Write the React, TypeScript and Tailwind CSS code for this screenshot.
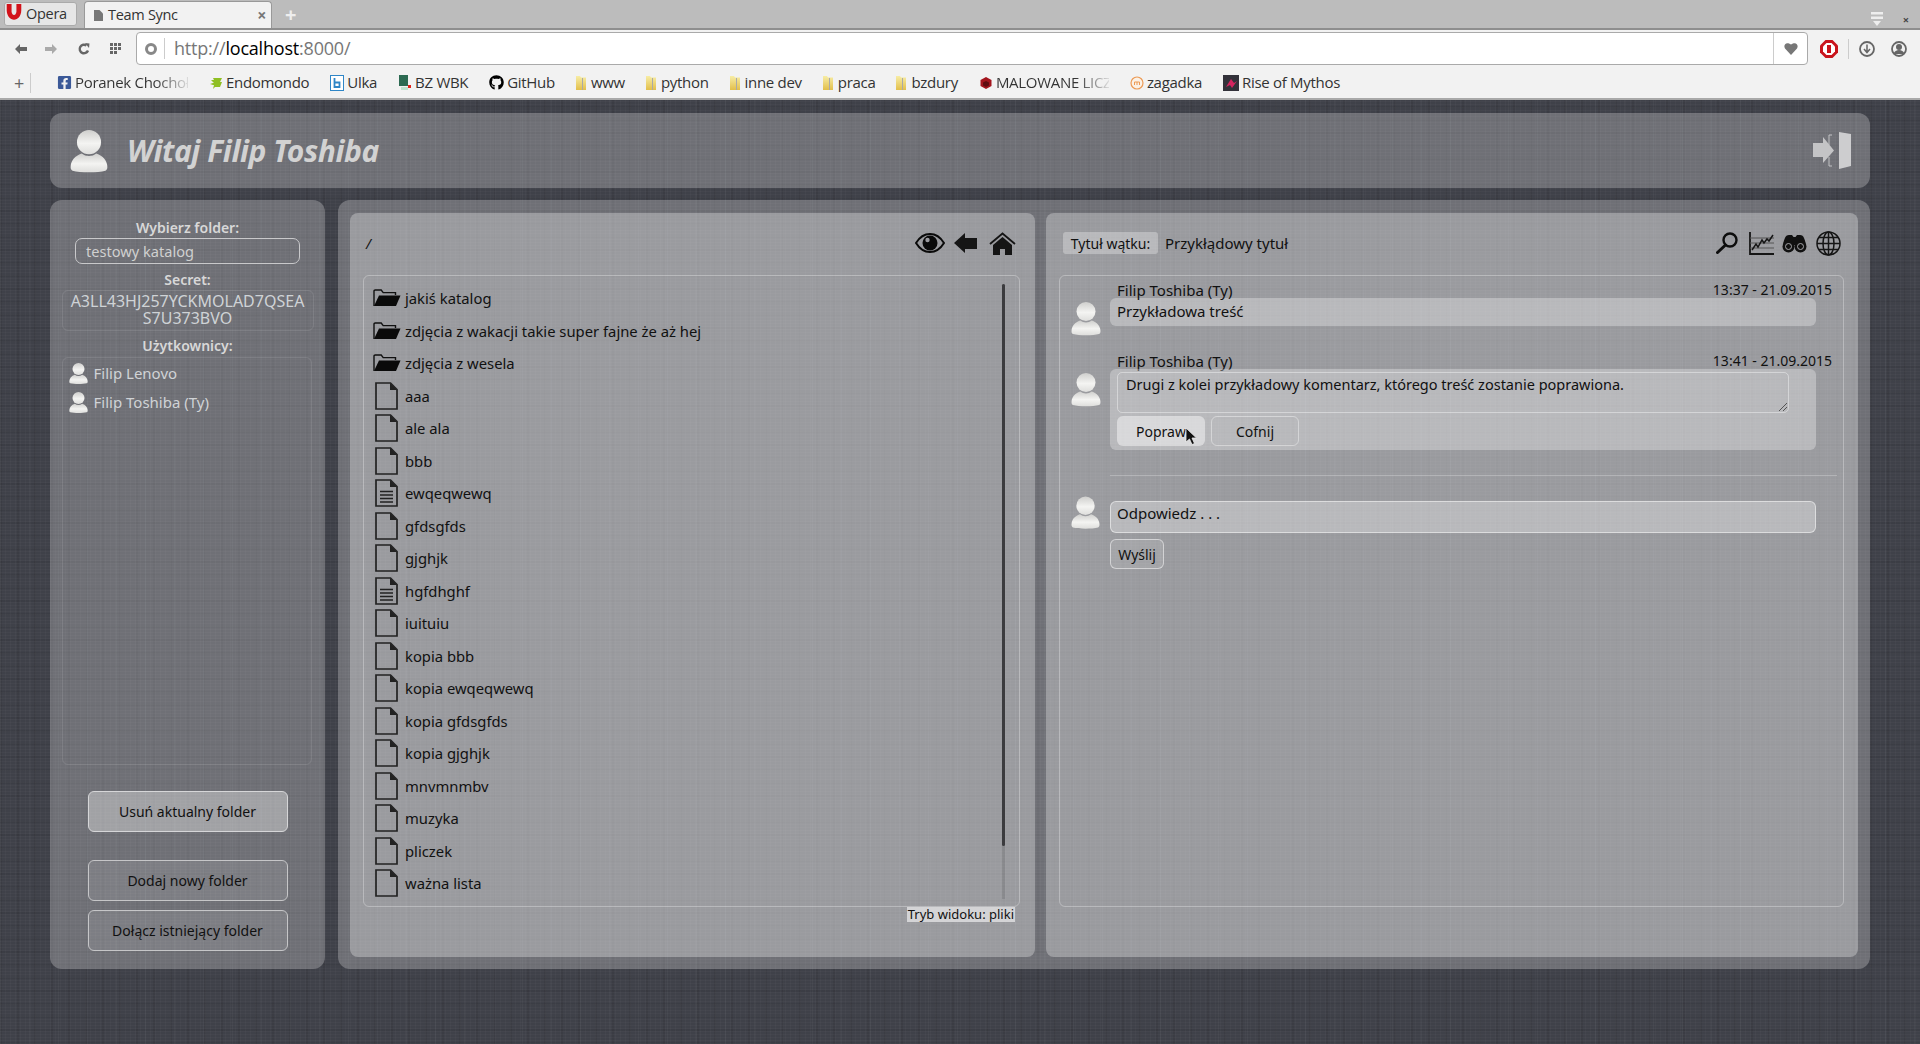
import React from 'react';
import { FaGithub, FaFacebookSquare } from 'react-icons/fa';

const bookmarks = [
  { label: 'Poranek Chochoł', kind: 'fb', faded: true },
  { label: 'Endomondo', kind: 'endo' },
  { label: 'Ulka', kind: 'ulka' },
  { label: 'BZ WBK', kind: 'bz' },
  { label: 'GitHub', kind: 'gh' },
  { label: 'www', kind: 'folder' },
  { label: 'python', kind: 'folder' },
  { label: 'inne dev', kind: 'folder' },
  { label: 'praca', kind: 'folder' },
  { label: 'bzdury', kind: 'folder' },
  { label: 'MALOWANE LICZ', kind: 'mal', faded: true },
  { label: 'zagadka', kind: 'zag' },
  { label: 'Rise of Mythos', kind: 'rise' },
];

const files = [
  { name: 'jakiś katalog', type: 'dir' },
  { name: 'zdjęcia z wakacji takie super fajne że aż hej', type: 'dir' },
  { name: 'zdjęcia z wesela', type: 'dir' },
  { name: 'aaa', type: 'file' },
  { name: 'ale ala', type: 'file' },
  { name: 'bbb', type: 'file' },
  { name: 'ewqeqwewq', type: 'text' },
  { name: 'gfdsgfds', type: 'file' },
  { name: 'gjghjk', type: 'file' },
  { name: 'hgfdhghf', type: 'text' },
  { name: 'iuituiu', type: 'file' },
  { name: 'kopia bbb', type: 'file' },
  { name: 'kopia ewqeqwewq', type: 'file' },
  { name: 'kopia gfdsgfds', type: 'file' },
  { name: 'kopia gjghjk', type: 'file' },
  { name: 'mnvmnmbv', type: 'file' },
  { name: 'muzyka', type: 'file' },
  { name: 'pliczek', type: 'file' },
  { name: 'ważna lista', type: 'file' },
];

const Avatar = ({ className }: { className: string }) => (
  <svg viewBox="0 0 30 34" className={className}>
    <defs>
      <linearGradient id="avatarFill" x1="0" y1="0" x2="0" y2="1">
        <stop offset="0" stopColor="#cfcfcd" />
        <stop offset="0.55" stopColor="#f4f4f2" />
        <stop offset="1" stopColor="#dededc" />
      </linearGradient>
    </defs>
    <path d="M2 32.5c-1.5-.5-1.6-2-1.4-4 .4-4 3.2-7.8 8.6-9.6 1.8 1.3 3.6 2 5.8 2s4-.7 5.8-2c5.4 1.8 8.2 5.6 8.6 9.6.2 2 .1 3.5-1.4 4-3 .9-8 1.2-13 1.2s-10-.3-13-1.2z" fill="url(#avatarFill)" />
    <circle cx="15" cy="10" r="9.5" fill="url(#avatarFill)" />
  </svg>
);

const FolderOpen = () => (
  <svg viewBox="0 0 28 18" className="h-[18px] w-[28px]">
    <path d="M1 17V2.2C1 1.5 1.5 1 2.2 1h6l2 2.6h12.3V6" fill="none" stroke="#111" strokeWidth="1.4" />
    <path d="M6 6.5h21.5L23 17H1z" fill="#0a0a0a" />
  </svg>
);

const FileIcon = ({ lines }: { lines?: boolean }) => (
  <svg viewBox="0 0 23 28" className="h-[28px] w-[23px]">
    <path d="M1 1h14.5L22 7.5V27H1z" fill="none" stroke="#222" strokeWidth="1.7" />
    <path d="M15 1v7h7z" fill="#222" />
    {lines && <path d="M5 12.5h13M5 16h13M5 19.5h13M5 23h13" stroke="#222" strokeWidth="1.6" />}
  </svg>
);

const FolderMini = () => (
  <svg viewBox="0 0 10 16" className="h-4 w-[10px] shrink-0">
    <defs>
      <linearGradient id="folderFill" x1="0" y1="0" x2="0" y2="1">
        <stop offset="0" stopColor="#f7eda6" />
        <stop offset="1" stopColor="#e2bf4a" />
      </linearGradient>
    </defs>
    <path d="M0 1h4l1 1.500h5V15H0z" fill="url(#folderFill)" />
    <path d="M6 3h1v12H6z" fill="#a9a9a9" />
  </svg>
);

const BookmarkIcon = ({ kind }: { kind: string }) => {
  if (kind === 'fb') return <FaFacebookSquare className="h-[15px] w-[15px] shrink-0 text-[#3b5998]" />;
  if (kind === 'gh') return <FaGithub className="h-[15px] w-[15px] shrink-0 text-black" />;
  if (kind === 'folder') return <FolderMini />;
  if (kind === 'endo')
    return (
      <svg viewBox="0 0 14 14" className="h-[14px] w-[14px] shrink-0">
        <path d="M4 2h9L11 6h2l-2 5H6l-2 2 1-4H1l3-1-3-1h4L2 4h3z" fill="#8fbf22" />
      </svg>
    );
  if (kind === 'ulka')
    return (
      <svg viewBox="0 0 14 16" className="h-4 w-[14px] shrink-0">
        <rect x="0.5" y="0.5" width="13" height="15" fill="#fff" stroke="#2f86c7" />
        <path d="M4.5 3v9h5V7.5h-5" fill="none" stroke="#2f86c7" strokeWidth="1.8" />
      </svg>
    );
  if (kind === 'bz')
    return (
      <svg viewBox="0 0 14 16" className="h-4 w-[14px] shrink-0">
        <path d="M1 0h9v11H1z" fill="#2c6a52" />
        <path d="M3 12h7v3H3z" fill="#bfe3cf" />
        <path d="M10 10h3v3h-3z" fill="#e2231a" />
      </svg>
    );
  if (kind === 'mal')
    return (
      <svg viewBox="0 0 14 14" className="h-[14px] w-[14px] shrink-0">
        <path d="M7 1l5.5 3v6L7 13 1.500 10V4z" fill="#a3151d" />
        <path d="M7 5l3 1.500v3L7 11 4 9.500v-3z" fill="#5f0c10" />
      </svg>
    );
  if (kind === 'zag')
    return (
      <svg viewBox="0 0 14 14" className="h-[14px] w-[14px] shrink-0">
        <circle cx="7" cy="7" r="6" fill="#fbf1e6" stroke="#ec9a55" strokeWidth="1.200" />
        <path d="M4.500 9V6h5v3M7 6v3" fill="none" stroke="#ec9a55" />
      </svg>
    );
  return (
    <svg viewBox="0 0 16 16" className="h-4 w-4 shrink-0">
      <rect width="16" height="16" fill="#33323a" />
      <path d="M3 12l5-8 3 4 3-2-5 7-2-3z" fill="#d5245f" />
    </svg>
  );
};

const BrowserChrome = () => (
  <div className="font-['Open_Sans',sans-serif] text-[#333]">
    <div className="flex h-[30px] items-end border-b-2 border-[#8e8e8e] bg-[#bcbcbc] pl-1">
      <div className="mb-[2px] flex h-[24px] w-[73px] items-center gap-[3px] overflow-hidden rounded-[3px] border border-[#aaa] bg-[#e6e6e6] text-[14.5px] tracking-[-0.3px]">
        <svg viewBox="0 0 14 14" className="-mt-1 h-[17px] w-[18px] shrink-0">
          <path d="M1 0h12v5c0 5-3 8-6 8S1 10 1 5z" fill="#d2121a" />
          <path d="M5 0h4v6c0 2-1 3-2 3S5 8 5 6z" fill="#e6e6e6" />
        </svg>
        Opera
      </div>
      <div className="ml-[7px] flex h-[27px] w-[188px] items-center rounded-t-[4px] border border-b-0 border-[#999] bg-[#f2f2f2] pl-[9px] pr-[5px] text-[14.5px] tracking-[-0.3px]">
        <svg viewBox="0 0 9 11" className="mr-[5px] h-[11px] w-[9px]">
          <path d="M0 0h5.500L9 3.500V11H0z" fill="#777" />
        </svg>
        Team Sync
        <span className="ml-auto text-[16px] font-bold leading-none text-[#777]">×</span>
      </div>
      <div className="mb-[2px] ml-[13px] text-[20px] font-bold leading-[22px] text-[#eee]">+</div>
      <div className="mb-[2px] ml-auto flex items-center gap-[20px] pr-[11px] text-[#666]">
        <svg viewBox="0 0 12 14" className="h-[14px] w-3">
          <path d="M0 0h12v2.500H0zM0 4.500h12V7H0z" fill="#eee" />
          <path d="M2 9h8l-4 5z" fill="#eee" />
        </svg>
        <span className="text-[11px] font-bold leading-none text-[#444]">×</span>
      </div>
    </div>
    <div className="flex h-[37px] items-center bg-[#f2f2f2]">
      <div className="flex w-[136px] items-center pl-[15px] text-[#666]">
        <svg viewBox="0 0 12 10" className="h-[10px] w-3"><path d="M0 5l5-5v3h7v4H5v3z" fill="#666" /></svg>
        <svg viewBox="0 0 12 10" className="ml-[18px] h-[10px] w-3"><path d="M12 5L7 0v3H0v4h7v3z" fill="#aaa" /></svg>
        <svg viewBox="0 0 12 12" className="ml-[21px] h-3 w-3">
          <path d="M10 7.500A4.300 4.300 0 1 1 8.500 2.500" fill="none" stroke="#666" strokeWidth="2.400" />
          <path d="M7 0l4.500.5L11 5z" fill="#666" />
        </svg>
        <svg viewBox="0 0 11 11" className="ml-[20px] h-[11px] w-[11px]">
          <path d="M0 0h3v3H0zM4 0h3v3H4zM8 0h3v3H8zM0 4h3v3H0zM4 4h3v3H4zM8 4h3v3H8zM0 8h3v3H0zM4 8h3v3H4z" fill="#666" />
        </svg>
      </div>
      <div className="flex h-[33px] w-[1672px] items-center rounded-[4px] border border-[#aaa] bg-white">
        <div className="flex h-[21px] w-[28px] items-center justify-center border-r border-[#ccc]">
          <span className="h-[12px] w-[12px] rounded-full border-[3px] border-[#888]" />
        </div>
        <div className="pl-[9px] text-[18px] tracking-[-0.2px] text-[#777]">
          http://<span className="text-black">localhost</span>:8000/
        </div>
        <div className="ml-auto flex h-full w-[34px] items-center justify-center border-l border-[#ccc]">
          <svg viewBox="0 0 14 13" className="h-[13px] w-[14px]">
            <path d="M7 13L1 6.500C-1 3 2-1 7 2.500 12-1 15 3 13 6.500z" fill="#777" />
          </svg>
        </div>
      </div>
      <div className="ml-[12px] flex items-center">
        <svg viewBox="0 0 18 18" className="h-[18px] w-[18px]">
          <path d="M5.500 0h7L18 5.500v7L12.500 18h-7L0 12.500v-7z" fill="#c9141c" />
          <path d="M6.500 3h5L15 6.500v5L11.500 15h-5L3 11.500v-5z" fill="#fff" />
          <path d="M7 5h4v8H7z" fill="#c9141c" />
        </svg>
        <span className="ml-[10px] h-5 w-px bg-[#ccc]" />
        <svg viewBox="0 0 16 16" className="ml-[10px] h-4 w-4">
          <circle cx="8" cy="8" r="7" fill="none" stroke="#666" strokeWidth="1.800" />
          <path d="M8 3.500v7M5 8l3 3.500L11 8" fill="none" stroke="#666" strokeWidth="1.500" />
        </svg>
        <svg viewBox="0 0 16 16" className="ml-[16px] h-4 w-4">
          <circle cx="8" cy="8" r="7" fill="none" stroke="#666" strokeWidth="1.800" />
          <circle cx="8" cy="6" r="3" fill="#666" />
          <path d="M2.500 13c1-3 3-4 5.500-4s4.500 1 5.500 4z" fill="#666" />
        </svg>
      </div>
    </div>
    <div className="flex h-[33px] items-center border-b-2 border-[#a9a9a9] bg-[#f2f2f2] text-[15px] tracking-[-0.3px]">
      <span className="w-[30px] pl-[14px] text-[18px] leading-none text-[#666]">+</span>
      <span className="mr-[26px] h-5 w-px bg-[#ccc]" />
      <div className="flex items-center gap-[21px]">
        {bookmarks.map(b => (
          <div key={b.label} className={b.kind === 'folder' ? 'flex items-center gap-[5px]' : 'flex items-center gap-[3px]'}>
            <BookmarkIcon kind={b.kind} />
            <span className={b.faded ? 'block max-w-[113px] overflow-hidden whitespace-nowrap bg-gradient-to-r from-[#333] from-70% to-[#ddd] bg-clip-text text-transparent' : 'whitespace-nowrap'}>
              {b.label}
            </span>
          </div>
        ))}
      </div>
    </div>
  </div>
);

const SidebarButton = ({ label, active }: { label: string; active?: boolean }) => (
  <button className={active
    ? 'h-[41px] w-[200px] rounded-[6px] border border-[#d6d6d8] bg-white/35 text-[14px] text-[#111]'
    : 'h-[41px] w-[200px] rounded-[6px] border border-[#c6c6c8] bg-white/10 text-[14px] text-[#111]'}>
    {label}
  </button>
);

const Sidebar = () => (
  <aside className="flex w-[275px] shrink-0 flex-col items-center rounded-[12px] bg-white/25 pt-[18px]">
    <div className="h-[20px] text-[14px] font-semibold leading-[20px] text-[#d8d8d8]">Wybierz folder:</div>
    <div className="h-[26px] w-[225px] rounded-[7px] border border-[#c9c9cb] pl-[10px] text-[14.6px] leading-[24px] text-[#d0d0d0]">testowy katalog</div>
    <div className="mt-[6px] h-[20px] text-[14px] font-semibold leading-[20px] text-[#d8d8d8]">Secret:</div>
    <div className="h-[41px] w-[252px] rounded-[6px] border border-white/10 pt-[2px] text-center text-[16px] leading-[17px] text-[#cfd3d6]">
      A3LL43HJ257YCKMOLAD7QSEA<br />S7U373BVO
    </div>
    <div className="mt-[4px] h-[22px] text-[14px] font-semibold leading-[22px] text-[#d8d8d8]">Użytkownicy:</div>
    <div className="mr-[2px] h-[408px] w-[250px] rounded-[6px] border border-white/10 pl-[6px] pt-[1px]">
      {['Filip Lenovo', 'Filip Toshiba (Ty)'].map(u => (
        <div key={u} className="flex h-[29px] items-center gap-[6px] text-[15px] text-[#d0d3d6]">
          <Avatar className="h-[23px] w-[19px]" />
          {u}
        </div>
      ))}
    </div>
    <div className="mt-[26px]"><SidebarButton label="Usuń aktualny folder" active /></div>
    <div className="mt-[28px]"><SidebarButton label="Dodaj nowy folder" /></div>
    <div className="mt-[9px]"><SidebarButton label="Dołącz istniejący folder" /></div>
  </aside>
);

const FilesPanel = () => (
  <section className="flex w-[685px] shrink-0 flex-col rounded-[8px] bg-white/30 text-[#111]">
    <div className="flex h-[62px] shrink-0 items-center pb-[2px] pl-[16px] pr-[19px]">
      <span className="text-[14px] italic">/</span>
      <div className="ml-auto flex items-center">
        <svg viewBox="0 0 30 20" className="h-[20px] w-[30px]">
          <path d="M1 10C5 3.500 10 1 15 1s10 2.500 14 9c-4 6.500-9 9-14 9S5 16.500 1 10z" fill="none" stroke="#0a0a0a" strokeWidth="2" />
          <circle cx="15" cy="10" r="7.500" fill="#0a0a0a" />
          <circle cx="12.500" cy="7" r="2.200" fill="#9a9a9f" />
        </svg>
        <svg viewBox="0 0 23 20" className="ml-[9px] h-[20px] w-[23px]">
          <path d="M0 10L11 0v5h12v11H11v4z" fill="#151515" />
        </svg>
        <svg viewBox="0 0 27 23" className="ml-[12px] h-[23px] w-[27px]">
          <path d="M1 12L13.500 1.500 26 12" fill="none" stroke="#151515" strokeWidth="1.800" />
          <path d="M4 13l9.500-8 9.500 8v10h-7v-6h-5v6H4z" fill="#151515" />
        </svg>
      </div>
    </div>
    <div className="relative ml-[13px] mr-[15px] h-[632px] shrink-0 rounded-[6px] border border-white/30 pl-[7px] pt-[6px]">
      {files.map(f => (
        <div key={f.name} className="flex h-[32.5px] items-center text-[14.8px]">
          <span className="flex w-[34px] shrink-0 items-center justify-center pr-[4px]">
            {f.type === 'dir' ? <span className="ml-[2px] flex"><FolderOpen /></span> : <FileIcon lines={f.type === 'text'} />}
          </span>
          {f.name}
        </div>
      ))}
      <div className="absolute right-[14px] top-[8px] h-[615px] w-[3px] bg-black/10" />
      <div className="absolute right-[14px] top-[8px] h-[562px] w-[3px] rounded-full bg-[#3b3b3e]" />
    </div>
    <div className="mr-[20px] self-end bg-[#d4d4d6] px-px text-[13px] leading-[15px] text-[#111]">Tryb widoku: pliki</div>
  </section>
);

const Message = ({ time, children }: { time: string; children: React.ReactNode }) => (
  <div className="flex">
    <div className="w-[50px] shrink-0 pl-[11px] pt-[19px]">
      <Avatar className="h-[35px] w-[30px]" />
    </div>
    <div className="min-w-0 flex-1 pr-[6px]">
      <div className="flex h-[16px] items-center justify-between pl-[7px] pr-[5px] text-[15px] leading-[16px]">
        <span>Filip Toshiba (Ty)</span>
        <span className="text-[14px]">{time}</span>
      </div>
      {children}
    </div>
  </div>
);

const ThreadPanel = () => (
  <section className="flex min-w-0 flex-1 flex-col rounded-[8px] bg-white/30 text-[#111]">
    <div className="flex h-[62px] shrink-0 items-center pb-[2px] pl-[17px] pr-[17px]">
      <span className="flex h-[22px] w-[95px] items-center justify-center rounded-[3px] bg-white/30 text-[14px]">Tytuł wątku:</span>
      <span className="ml-[7px] text-[15px]">Przykłądowy tytuł</span>
      <div className="ml-auto flex items-center">
        <svg viewBox="0 0 22 22" className="h-[22px] w-[22px]">
          <circle cx="14" cy="8" r="6.500" fill="none" stroke="#0d0d0d" strokeWidth="2.400" />
          <path d="M9.500 13L1.500 20.500" stroke="#0d0d0d" strokeWidth="3" strokeLinecap="round" />
        </svg>
        <svg viewBox="0 0 25 23" className="ml-[11px] h-[23px] w-[25px]">
          <path d="M1 0v22h24" fill="none" stroke="#151515" strokeWidth="1.800" />
          <path d="M1 6h24M1 11h24M1 16h24" stroke="#555" strokeWidth="1" />
          <path d="M3 18l4-6 2 3 4-7 2 3 3-4 2 2 4-6" fill="none" stroke="#151515" strokeWidth="1.500" />
        </svg>
        <svg viewBox="0 0 25 19" className="ml-[8px] h-[19px] w-[25px]">
          <path d="M1 11C2 6 3 1 7 1h3l1.500 2h2L15 1h3c4 0 5 5 6 10z" fill="#111" />
          <circle cx="6.500" cy="12.500" r="6" fill="#111" />
          <circle cx="18.500" cy="12.500" r="6" fill="#111" />
          <circle cx="6.500" cy="12.500" r="3" fill="none" stroke="#a5a5a9" strokeWidth="1" />
          <circle cx="18.500" cy="12.500" r="3" fill="none" stroke="#a5a5a9" strokeWidth="1" />
        </svg>
        <svg viewBox="0 0 25 25" className="ml-[9px] h-[25px] w-[25px]">
          <g fill="none" stroke="#151515" strokeWidth="1.500">
            <circle cx="12.500" cy="12.500" r="11.500" />
            <ellipse cx="12.500" cy="12.500" rx="5.500" ry="11.500" />
            <path d="M12.500 1v23M1 12.500h23M3 6.500h19M3 18.500h19" />
          </g>
        </svg>
      </div>
    </div>
    <div className="ml-[13px] mr-[14px] flex h-[632px] flex-col rounded-[6px] border border-white/30 pt-[6px]">
      <Message time="13:37 - 21.09.2015">
        <div className="mr-[21px] h-[28px] rounded-[6px] bg-white/30 pl-[7px] text-[15px] leading-[26px]">Przykładowa treść</div>
      </Message>
      <div className="mt-[17px]">
        <Message time="13:41 - 21.09.2015">
          <div className="relative mr-[21px] h-[81px] rounded-[6px] bg-white/30 pl-[7px] pr-[27px] pt-[3px]">
            <div className="h-[41px] rounded-[5px] border border-white/40 pl-[8px] text-[14.5px] leading-[22px]">
              Drugi z kolei przykładowy komentarz, którego treść zostanie poprawiona.
            </div>
            <svg viewBox="0 0 10 10" className="absolute right-[28px] top-[33px] h-[10px] w-[10px]">
              <path d="M1 9l8-8M5 9l4-4" stroke="#555" strokeWidth="1" />
            </svg>
            <div className="mt-[3px] flex gap-[6px]">
              <button className="h-[30px] w-[88px] rounded-[6px] bg-white/45 text-[14px]">Popraw</button>
              <button className="h-[30px] w-[88px] rounded-[6px] border border-white/40 text-[14px]">Cofnij</button>
            </div>
            <svg viewBox="0 0 12 18" className="absolute left-[75px] top-[58px] h-[18px] w-[12px]">
              <path d="M1 1v14l3.500-3 2.500 5.500 2.500-1L7 11h4.500z" fill="#111" stroke="#eee" strokeWidth="0.800" />
            </svg>
          </div>
        </Message>
      </div>
      <div className="ml-[50px] mr-[6px] mt-[25px] h-px bg-white/25" />
      <div className="mt-[20px] flex">
        <div className="w-[50px] shrink-0 pl-[11px]">
          <Avatar className="h-[33px] w-[29px]" />
        </div>
        <div className="flex-1 pr-[27px] pt-[5px]">
          <div className="h-[32px] rounded-[6px] border border-white/50 bg-white/30 pl-[6px] text-[15px] leading-[22px]">Odpowiedz . . .</div>
          <button className="mt-[6px] h-[30px] w-[54px] rounded-[6px] border border-white/50 bg-white/10 text-[14px]">Wyślij</button>
        </div>
      </div>
    </div>
  </section>
);

export default function App() {
  return (
    <div className="flex h-[1044px] flex-col overflow-hidden bg-[#3f4149]">
      <BrowserChrome />
      <div className="flex-1 bg-[repeating-linear-gradient(0deg,rgba(255,255,255,0.025)_0px,rgba(255,255,255,0.025)_1px,transparent_1px,transparent_3px),repeating-linear-gradient(90deg,rgba(255,255,255,0.025)_0px,rgba(255,255,255,0.025)_1px,transparent_1px,transparent_5px),repeating-linear-gradient(0deg,rgba(0,0,0,0.06)_0px,rgba(0,0,0,0.06)_2px,transparent_2px,transparent_13px),repeating-linear-gradient(90deg,rgba(0,0,0,0.07)_0px,rgba(0,0,0,0.07)_2px,transparent_2px,transparent_17px),repeating-linear-gradient(90deg,rgba(255,255,255,0.03)_0px,rgba(255,255,255,0.03)_1px,transparent_1px,transparent_29px)] px-[50px] pt-[13px] font-['Noto_Sans',sans-serif]">
        <header className="flex h-[75px] items-center rounded-[12px] bg-white/25 pl-[20px] pr-[19px]">
          <Avatar className="h-[44px] w-[38px]" />
          <h1 className="ml-[19px] text-[30px] font-bold italic tracking-[-0.4px] text-[#d2d2d2]">Witaj Filip Toshiba</h1>
          <svg viewBox="0 0 38 37" className="ml-auto h-[37px] w-[38px]">
            <path d="M0 11h10V5l11 13.500L10 31v-6H0z" fill="#c4c4c6" />
            <path d="M19 3h-3v10M19 34h-3V25" fill="none" stroke="#c4c4c6" strokeWidth="1" />
            <path d="M26 0l12 2v32l-12 3z" fill="#cdcdcf" />
          </svg>
        </header>
        <div className="mt-[12px] flex h-[769px] gap-[13px]">
          <Sidebar />
          <main className="flex min-w-0 flex-1 gap-[11px] rounded-[12px] bg-white/25 px-3 pb-3 pt-[13px]">
            <FilesPanel />
            <ThreadPanel />
          </main>
        </div>
      </div>
    </div>
  );
}
